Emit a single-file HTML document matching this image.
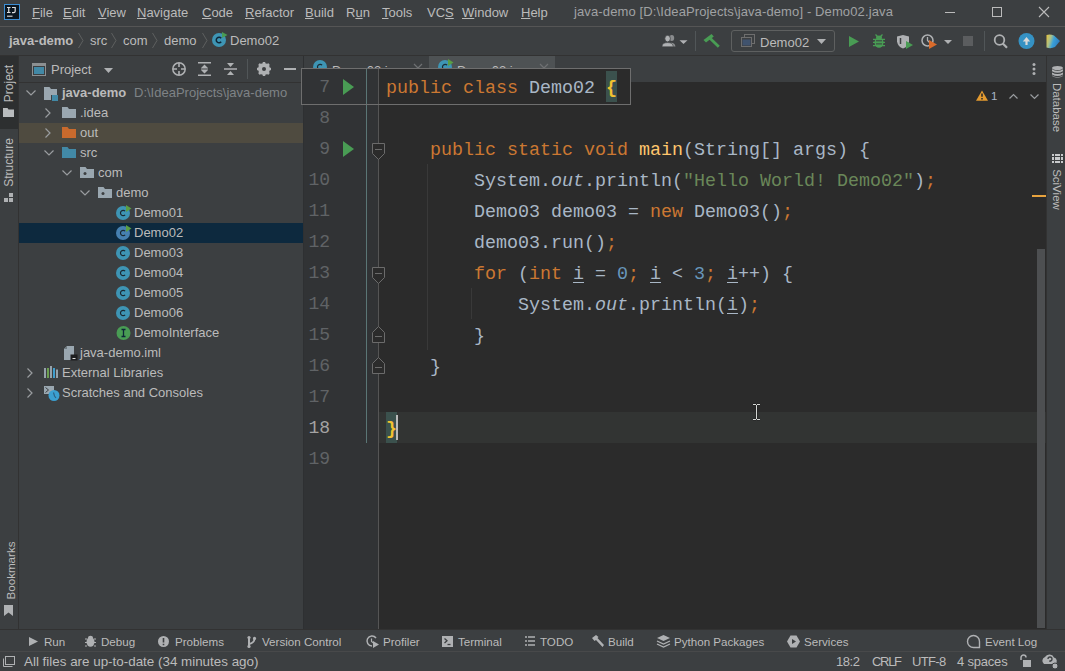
<!DOCTYPE html>
<html><head><meta charset="utf-8">
<style>
*{margin:0;padding:0;box-sizing:border-box}
html,body{width:1065px;height:671px;overflow:hidden;background:#3c3f41}
body{position:relative;font-family:"Liberation Sans",sans-serif;color:#bbbbbb}
.a{position:absolute}
.t{position:absolute;white-space:nowrap;font-size:13px;line-height:13px;color:#bbbbbb}
.u{text-decoration:underline;text-underline-offset:1px;text-decoration-thickness:1px}
svg{position:absolute;overflow:visible}
.code{position:absolute;left:386px;white-space:pre;font-family:"Liberation Mono",monospace;font-size:18.33px;line-height:31px;height:31px;color:#a9b7c6}
.k{color:#cc7832}
.s{color:#6a8759}
.n{color:#6897bb}
.m{color:#ffc66d}
.f{color:#a9b7c6;font-style:italic}
.ul{text-decoration:underline;text-underline-offset:3px}
.ln{position:absolute;left:303px;width:27px;text-align:right;font-family:"Liberation Mono",monospace;font-size:18px;line-height:31px;height:31px;color:#606366}
.row{position:absolute;left:19px;width:284px;height:20px}
</style></head><body>

<!-- ============ TITLE / MENU BAR ============ -->
<div class="a" style="left:0;top:0;width:1065px;height:26px;background:#3c3f41"></div>
<svg style="left:4px;top:4px" width="16" height="16"><rect x="0.5" y="0.5" width="15" height="15" fill="#0b1620" stroke="#3d8fd6"/><path d="M3 3.5H6.5M4.75 3.5V8.5M3 8.5H6.5" stroke="#e0e0e0" stroke-width="1.2" fill="none"/><path d="M8 3.5H11.2V7.3Q11.2 8.7 9.6 8.7H8" stroke="#e0e0e0" stroke-width="1.2" fill="none"/><path d="M3 12.2H8.5" stroke="#e0e0e0" stroke-width="1.1"/></svg>
<div class="t" style="left:32px;top:6px"><span class="u">F</span>ile</div>
<div class="t" style="left:63px;top:6px"><span class="u">E</span>dit</div>
<div class="t" style="left:98px;top:6px"><span class="u">V</span>iew</div>
<div class="t" style="left:137px;top:6px"><span class="u">N</span>avigate</div>
<div class="t" style="left:202px;top:6px"><span class="u">C</span>ode</div>
<div class="t" style="left:245px;top:6px"><span class="u">R</span>efactor</div>
<div class="t" style="left:305px;top:6px"><span class="u">B</span>uild</div>
<div class="t" style="left:346px;top:6px">R<span class="u">u</span>n</div>
<div class="t" style="left:382px;top:6px"><span class="u">T</span>ools</div>
<div class="t" style="left:427px;top:6px">VC<span class="u">S</span></div>
<div class="t" style="left:462px;top:6px"><span class="u">W</span>indow</div>
<div class="t" style="left:521px;top:6px"><span class="u">H</span>elp</div>
<div class="t" style="left:574px;top:5px;color:#a0a2a4;letter-spacing:0.12px">java-demo [D:\IdeaProjects\java-demo] - Demo02.java</div>
<div class="a" style="left:945px;top:12px;width:10px;height:1px;background:#bbb"></div>
<div class="a" style="left:992px;top:7px;width:10px;height:10px;border:1px solid #bbb"></div>
<svg style="left:1039px;top:7px" width="10" height="10"><path d="M0 0L10 10M10 0L0 10" stroke="#bbb" stroke-width="1.1"/></svg>
<div class="a" style="left:0;top:26px;width:1065px;height:1px;background:#555555"></div>

<!-- ============ NAV BAR ============ -->
<div class="t" style="left:9px;top:34px;font-weight:bold">java-demo</div>
<div class="t" style="left:90px;top:34px">src</div>
<div class="t" style="left:123px;top:34px">com</div>
<div class="t" style="left:164px;top:34px">demo</div>
<div class="t" style="left:230px;top:34px">Demo02</div>
<div class="a" style="left:0;top:55px;width:1065px;height:1px;background:#323232"></div>


<!-- breadcrumb chevrons -->
<svg style="left:78px;top:33px" width="6" height="15"><path d="M0.5 0L5 7.5L0.5 15" stroke="#5e6060" fill="none"/></svg>
<svg style="left:111px;top:33px" width="6" height="15"><path d="M0.5 0L5 7.5L0.5 15" stroke="#5e6060" fill="none"/></svg>
<svg style="left:152px;top:33px" width="6" height="15"><path d="M0.5 0L5 7.5L0.5 15" stroke="#5e6060" fill="none"/></svg>
<svg style="left:202px;top:33px" width="6" height="15"><path d="M0.5 0L5 7.5L0.5 15" stroke="#5e6060" fill="none"/></svg>
<!-- class icon in breadcrumb -->
<svg style="left:212px;top:32px" width="16" height="16"><circle cx="7" cy="8" r="7" fill="#3e95b4"/><path d="M9.2 6.2A2.8 2.8 0 1 0 9.2 9.8" stroke="#0e2638" stroke-width="1.5" fill="none"/><path d="M10 0L15.5 3L10 6Z" fill="#499c54"/></svg>

<!-- toolbar right -->
<svg style="left:662px;top:34px" width="26" height="14"><ellipse cx="9.8" cy="4" rx="2.4" ry="3" fill="#8a8c8e"/><path d="M8 9Q12.5 8 13.5 12.5H10Z" fill="#8a8c8e"/><ellipse cx="5.6" cy="4.6" rx="2.8" ry="3.3" fill="#afb1b3" stroke="#3c3f41" stroke-width="0.8"/><path d="M0 12.8Q0 8.6 5.6 8.6Q11.2 8.6 11.2 12.8Z" fill="#afb1b3" stroke="#3c3f41" stroke-width="0.6"/><path d="M17.5 6.2L25.5 6.2L21.5 10Z" fill="#afb1b3"/></svg>
<div class="a" style="left:695px;top:31px;width:1px;height:20px;background:#515658"></div>
<svg style="left:704px;top:34px" width="16" height="14"><path d="M-0.5 6L7.5 0L9.8 2.4L2 8.4Z" fill="#499c54"/><path d="M5.5 3.8L14.8 12.8" stroke="#499c54" stroke-width="2.8"/></svg>
<div class="a" style="left:731px;top:30px;width:104px;height:22px;border:1px solid #5e6060;border-radius:3px"></div>
<svg style="left:741px;top:34px" width="14" height="13"><rect x="3.5" y="0.5" width="10" height="9" fill="none" stroke="#6e6e6e"/><rect x="0.5" y="3.5" width="10" height="9" fill="#3c3f41" stroke="#6e6e6e"/><rect x="1.5" y="5.5" width="8" height="6" fill="#40536e"/></svg>
<div class="t" style="left:760px;top:36px">Demo02</div>
<svg style="left:817px;top:39px" width="9" height="5"><path d="M0 0L9 0L4.5 5Z" fill="#afb1b3"/></svg>
<svg style="left:849px;top:36px" width="10" height="11"><path d="M0 0L10 5.5L0 11Z" fill="#499c54"/></svg>
<svg style="left:872px;top:34px" width="14" height="14"><path d="M3.5 0.5L5.5 2.5M10.5 0.5L8.5 2.5" stroke="#499c54" stroke-width="1.3"/><ellipse cx="7" cy="3.2" rx="3" ry="1.8" fill="#499c54"/><ellipse cx="7" cy="8.5" rx="4.5" ry="5.2" fill="#499c54"/><path d="M1 5.3H13M1 8.3H13M1 11.7H13" stroke="#499c54" stroke-width="1.3"/><path d="M4 6.8H10M4 9.9H10" stroke="#3c3f41" stroke-width="1"/></svg>
<svg style="left:897px;top:35px" width="17" height="14"><path d="M0 1.5L6 0L12 1.5L12 6.5Q11 12 6 13.5Q1 12 0 6.5Z" fill="#afb1b3"/><path d="M6 1L6 13" stroke="#3c3f41" stroke-width="0.0"/><path d="M3.5 3V9" stroke="#3c3f41" stroke-width="1.5"/><path d="M9 6L16 10L9 14Z" fill="#499c54"/></svg>
<svg style="left:921px;top:34px" width="17" height="15"><circle cx="6.5" cy="6.5" r="5.5" fill="none" stroke="#afb1b3" stroke-width="1.5"/><path d="M6.5 3V6.5L8.5 8.5" stroke="#afb1b3" stroke-width="1.3" fill="none"/><path d="M8 6L16 10.5L8 15Z" fill="#d96b2b"/></svg>
<svg style="left:944px;top:40px" width="8" height="4"><path d="M0 0L8 0L4 4Z" fill="#afb1b3"/></svg>
<div class="a" style="left:963px;top:36px;width:10px;height:10px;background:#5b5d5f"></div>
<div class="a" style="left:984px;top:31px;width:1px;height:20px;background:#515658"></div>
<svg style="left:993px;top:34px" width="16" height="15"><circle cx="6.5" cy="6" r="4.8" fill="none" stroke="#afb1b3" stroke-width="1.8"/><path d="M9.8 9.5L14 13.8" stroke="#afb1b3" stroke-width="2.2"/></svg>
<svg style="left:1018px;top:33px" width="17" height="16"><circle cx="8.5" cy="8" r="8" fill="#3592c4"/><path d="M8.5 12V7.5" stroke="#d8d8d8" stroke-width="2.2"/><path d="M4.8 8.5L8.5 4L12.2 8.5Z" fill="#d8d8d8"/></svg>
<svg style="left:1046px;top:34px" width="15" height="15"><defs><linearGradient id="lg1" x1="0" y1="0" x2="1" y2="0.3"><stop offset="0" stop-color="#e9c33a"/><stop offset="0.35" stop-color="#a9c08a"/><stop offset="0.6" stop-color="#3aa0d8"/><stop offset="1" stop-color="#2f7fc0"/></linearGradient></defs><path d="M0.5 1Q4 0 8 1.5L14 7L9 13Q5 15 0.5 13.5Z" fill="url(#lg1)"/></svg>

<div class="a" style="left:0;top:56px;width:19px;height:574px;background:#3c3f41"></div>
<div class="a" style="left:0;top:56px;width:18px;height:73px;background:#2d2f30"></div>
<div class="a" style="left:18px;top:56px;width:1px;height:574px;background:#323232"></div>
<div class="a" style="left:-18px;top:77px;width:54px;height:13px;transform:rotate(-90deg);font-size:12px;line-height:13px;color:#bbbbbb;text-align:center">Project</div>
<svg style="left:3px;top:108px" width="11" height="9"><path d="M0 0H4.5L5.5 1.5H11V9H0Z" fill="#b9bcbe"/></svg>
<div class="a" style="left:-21px;top:156px;width:60px;height:13px;transform:rotate(-90deg);font-size:12px;line-height:13px;color:#bbbbbb;text-align:center">Structure</div>
<svg style="left:4px;top:193px" width="10" height="9"><rect x="0" y="5" width="4" height="4" fill="#afb1b3"/><rect x="5" y="5" width="4" height="4" fill="#afb1b3"/><rect x="5" y="0" width="4" height="4" fill="#afb1b3"/></svg>
<div class="a" style="left:-23.5px;top:564px;width:66px;height:13px;transform:rotate(-90deg);font-size:11.6px;line-height:13px;color:#bbbbbb;text-align:center">Bookmarks</div>
<svg style="left:4px;top:605px" width="10" height="11"><path d="M0 0H9V11L4.5 7.5L0 11Z" fill="#afb1b3"/></svg>
<svg style="left:32px;top:63px" width="14" height="13"><rect x="0.5" y="0.5" width="13" height="12" fill="none" stroke="#8c9092"/><rect x="1" y="1" width="12" height="2" fill="#8c9092"/><rect x="2" y="4" width="10" height="7" fill="#4289a6"/></svg>
<div class="t" style="left:51px;top:63px">Project</div>
<svg style="left:104px;top:68px" width="9" height="5"><path d="M0 0L9 0L4.5 5Z" fill="#afb1b3"/></svg>
<svg style="left:172px;top:62px" width="15" height="15"><circle cx="7" cy="7" r="6.2" fill="none" stroke="#afb1b3" stroke-width="1.5"/><path d="M7 1V5M7 9V13M1 7H5M9 7H13" stroke="#afb1b3" stroke-width="1.6"/></svg>
<svg style="left:198px;top:62px" width="13" height="14"><path d="M0 0.75H13M0 13.25H13" stroke="#afb1b3" stroke-width="1.5"/><path d="M6.5 2.5L3 6H10ZM6.5 11.5L3 8H10Z" fill="#afb1b3"/><path d="M3 7H10" stroke="#afb1b3"/></svg>
<svg style="left:224px;top:62px" width="13" height="14"><path d="M0 7H13" stroke="#afb1b3" stroke-width="1.5"/><path d="M6.5 5L3 1H10ZM6.5 9L3 13H10Z" fill="#afb1b3"/></svg>
<div class="a" style="left:247px;top:59px;width:1px;height:20px;background:#515658"></div>
<svg style="left:257px;top:62px" width="14" height="14"><circle cx="7" cy="7" r="4.5" fill="none" stroke="#afb1b3" stroke-width="3"/><path d="M7 0V14M0 7H14M2 2L12 12M12 2L2 12" stroke="#afb1b3" stroke-width="2.5"/><circle cx="7" cy="7" r="2" fill="#3c3f41"/></svg>
<div class="a" style="left:284px;top:68px;width:12px;height:2px;background:#afb1b3"></div>
<div class="a" style="left:19px;top:82px;width:284px;height:1px;background:#323232"></div>
<div class="row" style="top:123px;background:#4f4b40"></div>
<div class="row" style="top:223px;background:#0d293e"></div>
<svg style="left:26px;top:90px" width="10" height="6"><path d="M0.5 0.5L5 5L9.5 0.5" stroke="#9a9da0" stroke-width="1.2" fill="none"/></svg>
<svg style="left:44px;top:87px" width="15" height="14"><path d="M0 0H5.5L7 2H13V8H7V13H0Z" fill="#9aa7b0"/><rect x="8" y="8" width="6" height="6" fill="#4289a6"/></svg>
<div class="t" style="left:62px;top:86px;font-weight:bold">java-demo</div>
<div class="t" style="left:134px;top:86px;color:#7f8386">D:\IdeaProjects\java-demo</div>
<svg style="left:45px;top:108px" width="6" height="10"><path d="M0.5 0.5L5 5L0.5 9.5" stroke="#9a9da0" stroke-width="1.2" fill="none"/></svg>
<svg style="left:62px;top:107px" width="14" height="11"><path d="M0 0H5.5L7 2H14V11H0Z" fill="#9aa7b0"/></svg>
<div class="t" style="left:80px;top:106px;">.idea</div>
<svg style="left:45px;top:128px" width="6" height="10"><path d="M0.5 0.5L5 5L0.5 9.5" stroke="#9a9da0" stroke-width="1.2" fill="none"/></svg>
<svg style="left:62px;top:127px" width="14" height="11"><path d="M0 0H5.5L7 2H14V11H0Z" fill="#c96a2d"/></svg>
<div class="t" style="left:80px;top:126px;">out</div>
<svg style="left:44px;top:150px" width="10" height="6"><path d="M0.5 0.5L5 5L9.5 0.5" stroke="#9a9da0" stroke-width="1.2" fill="none"/></svg>
<svg style="left:62px;top:147px" width="14" height="11"><path d="M0 0H5.5L7 2H14V11H0Z" fill="#4289a6"/></svg>
<div class="t" style="left:80px;top:146px;">src</div>
<svg style="left:62px;top:170px" width="10" height="6"><path d="M0.5 0.5L5 5L9.5 0.5" stroke="#9a9da0" stroke-width="1.2" fill="none"/></svg>
<svg style="left:80px;top:167px" width="14" height="11"><path d="M0 0H5.5L7 2H14V11H0Z" fill="#9aa7b0"/><circle cx="5" cy="6.5" r="1.5" fill="#3c3f41"/></svg>
<div class="t" style="left:98px;top:166px;">com</div>
<svg style="left:80px;top:190px" width="10" height="6"><path d="M0.5 0.5L5 5L9.5 0.5" stroke="#9a9da0" stroke-width="1.2" fill="none"/></svg>
<svg style="left:98px;top:187px" width="14" height="11"><path d="M0 0H5.5L7 2H14V11H0Z" fill="#9aa7b0"/><circle cx="5" cy="6.5" r="1.5" fill="#3c3f41"/></svg>
<div class="t" style="left:116px;top:186px;">demo</div>
<svg style="left:116px;top:205px" width="16" height="16"><circle cx="7" cy="8" r="7" fill="#3e95b4"/><path d="M9.1 6.1A2.7 2.7 0 1 0 9.1 9.9" stroke="#1a2a33" stroke-width="1.2" fill="none"/><path d="M10 0L15.5 3.5L10 7Z" fill="#5a9e45"/></svg>
<div class="t" style="left:134px;top:206px;">Demo01</div>
<svg style="left:116px;top:225px" width="16" height="16"><circle cx="7" cy="8" r="7" fill="#4680b0"/><path d="M9.1 6.1A2.7 2.7 0 1 0 9.1 9.9" stroke="#1a2a33" stroke-width="1.2" fill="none"/><path d="M10 0L15.5 3.5L10 7Z" fill="#5a9e45"/></svg>
<div class="t" style="left:134px;top:226px;">Demo02</div>
<svg style="left:116px;top:245px" width="16" height="16"><circle cx="7" cy="8" r="7" fill="#3e95b4"/><path d="M9.1 6.1A2.7 2.7 0 1 0 9.1 9.9" stroke="#1a2a33" stroke-width="1.2" fill="none"/></svg>
<div class="t" style="left:134px;top:246px;">Demo03</div>
<svg style="left:116px;top:265px" width="16" height="16"><circle cx="7" cy="8" r="7" fill="#3e95b4"/><path d="M9.1 6.1A2.7 2.7 0 1 0 9.1 9.9" stroke="#1a2a33" stroke-width="1.2" fill="none"/></svg>
<div class="t" style="left:134px;top:266px;">Demo04</div>
<svg style="left:116px;top:285px" width="16" height="16"><circle cx="7" cy="8" r="7" fill="#3e95b4"/><path d="M9.1 6.1A2.7 2.7 0 1 0 9.1 9.9" stroke="#1a2a33" stroke-width="1.2" fill="none"/></svg>
<div class="t" style="left:134px;top:286px;">Demo05</div>
<svg style="left:116px;top:305px" width="16" height="16"><circle cx="7" cy="8" r="7" fill="#3e95b4"/><path d="M9.1 6.1A2.7 2.7 0 1 0 9.1 9.9" stroke="#1a2a33" stroke-width="1.2" fill="none"/></svg>
<div class="t" style="left:134px;top:306px;">Demo06</div>
<svg style="left:116px;top:325px" width="16" height="16"><circle cx="7.5" cy="8" r="7" fill="#499c54"/><path d="M5.5 4.5H9.5M7.5 4.5V11.5M5.5 11.5H9.5" stroke="#0e2638" stroke-width="1.3"/></svg>
<div class="t" style="left:134px;top:326px;">DemoInterface</div>
<svg style="left:64px;top:346px" width="14" height="15"><path d="M0 3L3 0H10V14H0Z" fill="#9aa7b0"/><path d="M0 3L3 0V3Z" fill="#6f7a80"/><rect x="6.5" y="8.5" width="7" height="6" fill="#1e1f20"/><path d="M8.5 12.5H11.5" stroke="#ddd"/></svg>
<div class="t" style="left:80px;top:346px;">java-demo.iml</div>
<svg style="left:27px;top:368px" width="6" height="10"><path d="M0.5 0.5L5 5L0.5 9.5" stroke="#9a9da0" stroke-width="1.2" fill="none"/></svg>
<svg style="left:44px;top:365px" width="15" height="14"><path d="M1 3V13M4 3V13M7 1V13M10 3V13M13 4.5V13" stroke="#9aa7b0" stroke-width="1.9"/><path d="M4 3V13" stroke="#6a9f4c" stroke-width="1.9"/><path d="M10 3V13" stroke="#3b9fd0" stroke-width="1.9"/></svg>
<div class="t" style="left:62px;top:366px;">External Libraries</div>
<svg style="left:27px;top:388px" width="6" height="10"><path d="M0.5 0.5L5 5L0.5 9.5" stroke="#9a9da0" stroke-width="1.2" fill="none"/></svg>
<svg style="left:44px;top:386px" width="16" height="16"><path d="M0 0H10V8H0Z" fill="#9aa7b0"/><path d="M1.5 1.5L4.5 4L1.5 6.5" stroke="#3c3f41" stroke-width="1" fill="none"/><circle cx="10" cy="9.5" r="5.5" fill="#3b9fd0"/><path d="M9.5 6.5L10.5 10L12 12" stroke="#2d5f80" stroke-width="1.1" fill="none"/></svg>
<div class="t" style="left:62px;top:386px;">Scratches and Consoles</div>
<div class="a" style="left:303px;top:56px;width:744px;height:26px;background:#3c3f41"></div>
<div class="a" style="left:303px;top:56px;width:1px;height:574px;background:#2e3032"></div>
<div class="a" style="left:429px;top:56px;width:126px;height:26px;background:#4e5254"></div>
<svg style="left:313px;top:59px" width="16" height="16"><circle cx="7" cy="8" r="7" fill="#3e95b4"/><path d="M9.1 6.1A2.7 2.7 0 1 0 9.1 9.9" stroke="#1a2a33" stroke-width="1.2" fill="none"/></svg>
<div class="t" style="left:332px;top:64px">Demo03.java</div>
<svg style="left:414px;top:64px" width="8" height="8"><path d="M0 0L8 8M8 0L0 8" stroke="#6e7072" stroke-width="1.2"/></svg>
<svg style="left:438px;top:59px" width="16" height="16"><circle cx="7" cy="8" r="7" fill="#3e95b4"/><path d="M9.1 6.1A2.7 2.7 0 1 0 9.1 9.9" stroke="#1a2a33" stroke-width="1.2" fill="none"/><path d="M10 0L15.5 3.5L10 7Z" fill="#5a9e45"/></svg>
<div class="t" style="left:457px;top:64px">Demo02.java</div>
<svg style="left:540px;top:64px" width="8" height="8"><path d="M0 0L8 8M8 0L0 8" stroke="#6e7072" stroke-width="1.2"/></svg>
<svg style="left:1031px;top:62px" width="6" height="14"><circle cx="3" cy="2.6" r="1.5" fill="#afb1b3"/><circle cx="3" cy="7.1" r="1.5" fill="#afb1b3"/><circle cx="3" cy="11.6" r="1.5" fill="#afb1b3"/></svg>

<div class="a" style="left:304px;top:82px;width:743px;height:548px;background:#2b2b2b"></div>
<div class="a" style="left:304px;top:82px;width:75px;height:548px;background:#313335"></div>
<div class="a" style="left:379px;top:412px;width:668px;height:31px;background:#323433"></div>
<div class="a" style="left:378px;top:82px;width:1px;height:548px;background:#555555"></div>
<div class="a" style="left:366px;top:82px;width:1px;height:361px;background:#5b7676"></div>
<div class="a" style="left:427px;top:164px;width:1px;height:186px;background:#393939"></div>
<div class="a" style="left:471px;top:288px;width:1px;height:31px;background:#393939"></div>
<div class="ln" style="top:103.3px;color:#606366">8</div>
<div class="ln" style="top:134.3px;color:#606366">9</div>
<div class="ln" style="top:165.3px;color:#606366">10</div>
<div class="ln" style="top:196.3px;color:#606366">11</div>
<div class="ln" style="top:227.3px;color:#606366">12</div>
<div class="ln" style="top:258.3px;color:#606366">13</div>
<div class="ln" style="top:289.3px;color:#606366">14</div>
<div class="ln" style="top:320.3px;color:#606366">15</div>
<div class="ln" style="top:351.3px;color:#606366">16</div>
<div class="ln" style="top:382.3px;color:#606366">17</div>
<div class="ln" style="top:413.3px;color:#a4a3a3">18</div>
<div class="ln" style="top:444.3px;color:#606366">19</div>
<svg style="left:343px;top:141px" width="11" height="16"><path d="M0 0L11 8L0 16Z" fill="#499c54"/></svg>
<svg style="left:372px;top:143px" width="13" height="17"><path d="M0.5 0.5H12.5V10.5L6.5 16.5L0.5 10.5Z" fill="#2b2b2b" stroke="#6b6b6b"/><path d="M3 6.5H10" stroke="#6b6b6b"/></svg>
<svg style="left:372px;top:267px" width="13" height="17"><path d="M0.5 0.5H12.5V10.5L6.5 16.5L0.5 10.5Z" fill="#2b2b2b" stroke="#6b6b6b"/><path d="M3 6.5H10" stroke="#6b6b6b"/></svg>
<svg style="left:372px;top:325.8px" width="13" height="17"><path d="M0.5 16.5H12.5V6.5L6.5 0.5L0.5 6.5Z" fill="#2b2b2b" stroke="#6b6b6b"/><path d="M3 10.5H10" stroke="#6b6b6b"/></svg>
<svg style="left:372px;top:356.8px" width="13" height="17"><path d="M0.5 16.5H12.5V6.5L6.5 0.5L0.5 6.5Z" fill="#2b2b2b" stroke="#6b6b6b"/><path d="M3 10.5H10" stroke="#6b6b6b"/></svg>
<div class="code" style="top:135.1px">    <span class="k">public static void </span><span class="m">main</span>(String[] args) {</div>
<div class="code" style="top:166.1px">        System.<span class="f">out</span>.println(<span class="s">"Hello World! Demo02"</span>)<span class="k">;</span></div>
<div class="code" style="top:197.1px">        Demo03 demo03 = <span class="k">new </span>Demo03()<span class="k">;</span></div>
<div class="code" style="top:228.1px">        demo03.run()<span class="k">;</span></div>
<div class="code" style="top:259.1px">        <span class="k">for </span>(<span class="k">int </span><span class="ul">i</span> = <span class="n">0</span><span class="k">; </span><span class="ul">i</span> &lt; <span class="n">3</span><span class="k">; </span><span class="ul">i</span>++) {</div>
<div class="code" style="top:290.1px">            System.<span class="f">out</span>.println(<span class="ul">i</span>)<span class="k">;</span></div>
<div class="code" style="top:321.1px">        }</div>
<div class="code" style="top:352.1px">    }</div>
<div class="a" style="left:386px;top:412px;width:11px;height:31px;background:#3b514d"></div>
<div class="code" style="top:414.1px;color:#f2c230;font-weight:bold">}</div>
<div class="a" style="left:396px;top:415px;width:2px;height:25px;background:#bbbbbb"></div>
<div class="a" style="left:301px;top:68px;width:330px;height:37px;background:#2b2b2b;border:1px solid #6e6e6e"></div>
<div class="a" style="left:302px;top:69px;width:77px;height:35px;background:#313335"></div>
<div class="a" style="left:366px;top:69px;width:1px;height:35px;background:#5b7676"></div>
<div class="a" style="left:378px;top:69px;width:1px;height:35px;background:#555555"></div>
<div class="ln" style="top:72.3px">7</div>
<svg style="left:343px;top:79px" width="11" height="16"><path d="M0 0L11 8L0 16Z" fill="#499c54"/></svg>
<div class="a" style="left:606px;top:71px;width:11px;height:31px;background:#3b514d"></div>
<div class="code" style="top:73.1px"><span class="k">public class </span>Demo02 <span style="color:#f2c230;font-weight:bold">{</span></div>
<svg style="left:976px;top:90px" width="12" height="11"><path d="M6 0.5L12 10.8H0Z" fill="#e39a2f"/><path d="M6 3.5V6.8" stroke="#2b2b2b" stroke-width="1.6"/><path d="M6 8V9.6" stroke="#2b2b2b" stroke-width="1.6"/></svg>
<div class="t" style="left:991px;top:91px;color:#a9b7c6;font-size:11.5px;line-height:11px">1</div>
<svg style="left:1009px;top:94px" width="9" height="5"><path d="M0.5 4.5L4.5 0.5L8.5 4.5" stroke="#9a9da0" stroke-width="1.2" fill="none"/></svg>
<svg style="left:1030px;top:94px" width="9" height="5"><path d="M0.5 0.5L4.5 4.5L8.5 0.5" stroke="#9a9da0" stroke-width="1.2" fill="none"/></svg>
<div class="a" style="left:1032px;top:195px;width:14px;height:2px;background:#e8a33e"></div>
<div class="a" style="left:1037px;top:249px;width:8px;height:379px;background:#4d4f51"></div>
<div class="a" style="left:1047px;top:56px;width:18px;height:574px;background:#3c3f41"></div>
<div class="a" style="left:1046px;top:56px;width:1px;height:574px;background:#323232"></div>
<svg style="left:1052px;top:66px" width="11" height="12"><ellipse cx="5.5" cy="2" rx="5.5" ry="2" fill="#afb1b3"/><path d="M0 3.2Q5.5 6.5 11 3.2V5.2Q5.5 8.5 0 5.2ZM0 6.4Q5.5 9.7 11 6.4V8.4Q5.5 11.7 0 8.4ZM0 9.6Q5.5 12.9 11 9.6V10Q5.5 13.3 0 10Z" fill="#afb1b3"/></svg>
<div class="a" style="left:1026px;top:101px;width:60px;height:13px;transform:rotate(90deg);font-size:11.5px;line-height:13px;color:#bbbbbb;text-align:center">Database</div>
<svg style="left:1052px;top:154px" width="11" height="9"><rect x="0" y="0" width="2" height="2" fill="#c8cacc"/><rect x="0" y="3" width="2" height="3" fill="#c8cacc"/><rect x="0" y="7" width="2" height="2" fill="#c8cacc"/><rect x="3" y="0" width="5" height="2" fill="#c8cacc"/><rect x="3" y="3" width="5" height="3" fill="#c8cacc"/><rect x="3" y="7" width="5" height="2" fill="#c8cacc"/><rect x="9" y="0" width="2" height="2" fill="#c8cacc"/><rect x="9" y="3" width="2" height="3" fill="#c8cacc"/><rect x="9" y="7" width="2" height="2" fill="#c8cacc"/></svg>
<div class="a" style="left:1026px;top:183px;width:60px;height:13px;transform:rotate(90deg);font-size:11.5px;line-height:13px;color:#bbbbbb;text-align:center">SciView</div>
<div class="a" style="left:0;top:629px;width:1065px;height:1px;background:#323232"></div>
<svg style="left:29px;top:637px" width="9" height="9"><path d="M0 0L9 4.5L0 9Z" fill="#afb1b3"/></svg>
<div class="t" style="left:44px;top:636px;font-size:11.6px;line-height:12px">Run</div>
<svg style="left:85px;top:635px" width="11" height="12"><ellipse cx="5.5" cy="7" rx="4" ry="4.8" fill="#afb1b3"/><ellipse cx="5.5" cy="2.5" rx="2.5" ry="1.8" fill="#afb1b3"/><path d="M0 4H2M9 4H11M0 7.5H2M9 7.5H11M0 11H2M9 11H11" stroke="#afb1b3"/></svg>
<div class="t" style="left:101px;top:636px;font-size:11.6px;line-height:12px">Debug</div>
<svg style="left:158px;top:636px" width="11" height="11"><circle cx="5.5" cy="5.5" r="5.5" fill="#afb1b3"/><path d="M5.5 2V6.5M5.5 7.8V9.2" stroke="#3c3f41" stroke-width="1.6"/></svg>
<div class="t" style="left:175px;top:636px;font-size:11.6px;line-height:12px">Problems</div>
<svg style="left:247px;top:636px" width="10" height="12"><path d="M2 1.5V10.5" stroke="#afb1b3" stroke-width="2"/><path d="M7.5 2.5Q7.5 6.8 2 8" stroke="#afb1b3" stroke-width="1.8" fill="none"/><circle cx="2" cy="1.6" r="1.6" fill="#afb1b3"/><circle cx="2" cy="10.4" r="1.6" fill="#afb1b3"/><circle cx="7.5" cy="2.4" r="1.6" fill="#afb1b3"/></svg>
<div class="t" style="left:262px;top:636px;font-size:11.6px;line-height:12px">Version Control</div>
<svg style="left:366px;top:635px" width="13" height="13"><path d="M10 3A5 5 0 1 0 6 11" stroke="#afb1b3" stroke-width="1.5" fill="none"/><path d="M5.5 3.5V6.5L7.5 8" stroke="#afb1b3" stroke-width="1.2" fill="none"/><path d="M7 6L13 9.5L7 13Z" fill="#afb1b3"/></svg>
<div class="t" style="left:383px;top:636px;font-size:11.6px;line-height:12px">Profiler</div>
<svg style="left:442px;top:636px" width="11" height="11"><rect width="11" height="11" fill="#afb1b3"/><path d="M2.5 2.5L5 4.8L2.5 7" stroke="#3c3f41" stroke-width="1.3" fill="none"/><path d="M5.5 8.5H8.5" stroke="#3c3f41" stroke-width="1.3"/></svg>
<div class="t" style="left:458px;top:636px;font-size:11.6px;line-height:12px">Terminal</div>
<svg style="left:525px;top:636px" width="10" height="10"><path d="M0 1H2M3 1H10M0 5H2M3 5H10M0 9H2M3 9H10" stroke="#afb1b3" stroke-width="1.5"/></svg>
<div class="t" style="left:540px;top:636px;font-size:11.6px;line-height:12px">TODO</div>
<svg style="left:591px;top:635px" width="13" height="12"><path d="M1 3L5 0L7.5 2L6.5 3L13 10L11.5 12L5 5L3.5 6Z" fill="#afb1b3"/></svg>
<div class="t" style="left:608px;top:636px;font-size:11.6px;line-height:12px">Build</div>
<svg style="left:657px;top:635px" width="13" height="13"><path d="M6.5 0L13 3L6.5 6L0 3Z" fill="#afb1b3"/><path d="M0 6L6.5 9L13 6M0 9L6.5 12L13 9" stroke="#afb1b3" stroke-width="1.3" fill="none"/></svg>
<div class="t" style="left:674px;top:636px;font-size:11.6px;line-height:12px">Python Packages</div>
<svg style="left:787px;top:635px" width="13" height="13"><path d="M3.5 0.5H9.5L13 6.5L9.5 12.5H3.5L0 6.5Z" fill="#afb1b3"/><path d="M5 4L9 6.5L5 9Z" fill="#3c3f41"/></svg>
<div class="t" style="left:804px;top:636px;font-size:11.6px;line-height:12px">Services</div>
<svg style="left:967px;top:635px" width="13" height="13"><path d="M6.5 12.5A6 6 0 1 1 12.5 6.5V12.5Z" stroke="#afb1b3" stroke-width="1.4" fill="none"/></svg>
<div class="t" style="left:985px;top:636px;font-size:11.6px;line-height:12px">Event Log</div>
<div class="a" style="left:0;top:651px;width:1065px;height:1px;background:#48494a"></div>
<svg style="left:3px;top:656px" width="12" height="11"><rect x="2.5" y="0.5" width="9" height="8" fill="none" stroke="#afb1b3"/><path d="M0.5 2.5V10.5H9.5" stroke="#afb1b3" fill="none"/></svg>
<div class="t" style="left:24px;top:655px;font-size:13.4px">All files are up-to-date (34 minutes ago)</div>
<div class="t" style="left:836px;top:655px;font-size:13px;letter-spacing:-0.45px">18:2</div>
<div class="t" style="left:872px;top:655px;font-size:13px;letter-spacing:-1.3px">CRLF</div>
<div class="t" style="left:912px;top:655px;font-size:13px;letter-spacing:-0.64px">UTF-8</div>
<div class="t" style="left:957px;top:655px;font-size:13px;letter-spacing:-0.2px">4 spaces</div>
<svg style="left:1019px;top:654px" width="12" height="13"><path d="M2 6V3.5A2.5 2.5 0 0 1 7 3.5" stroke="#afb1b3" stroke-width="1.5" fill="none"/><rect x="4" y="6" width="8" height="7" fill="#afb1b3"/></svg>
<svg style="left:1042px;top:654px" width="17" height="15"><path d="M2 10A4 4 0 0 1 3 3A5 5 0 0 1 12 3.5A3.5 3.5 0 0 1 13 10Z" fill="#afb1b3"/><path d="M6 5A2 2 0 1 1 8 7V8" stroke="#3c3f41" stroke-width="1.3" fill="none"/><circle cx="13" cy="12" r="3" fill="#afb1b3" stroke="#3c3f41"/></svg>
<svg style="left:750px;top:402px" width="13" height="20"><path d="M3 2.5H6M7 2.5H10M3 17.5H6M7 17.5H10M6.5 3V17" stroke="#202020" stroke-width="2.6" stroke-opacity="0.6" fill="none"/><path d="M3 2.5H6M7 2.5H10M3 17.5H6M7 17.5H10M6.5 3V17" stroke="#d4d6d4" stroke-width="1" fill="none"/></svg>
</body></html>
